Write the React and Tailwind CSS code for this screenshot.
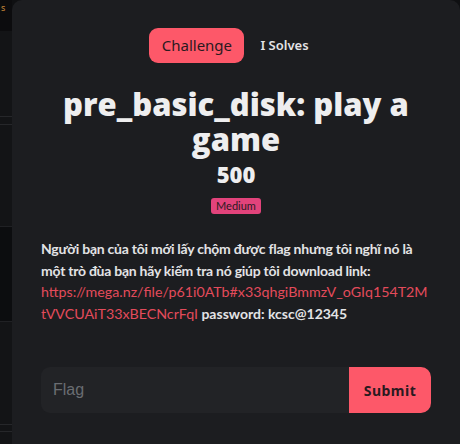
export default function App() {
  return (
    <div className="flex h-[444px] w-[460px] overflow-hidden bg-[#0f1012]">
      {/* backdrop table edge */}
      <div className="flex w-[12px] shrink-0 flex-col">
        <div className="h-[31px] bg-[#0c0c0e] pl-[1px] text-[9px] leading-[16px] text-[#c98a3a]">s</div>
        <div className="h-[86px] border-b border-[#26272a] bg-[#131416]" />
        <div className="h-[8px] border-b border-[#26272a] bg-[#131416]" />
        <div className="h-[102px] border-b border-[#202124] bg-[#131416]" />
        <div className="h-[95px] border-b border-[#202124] bg-[#0c0d0f]" />
        <div className="h-[103px] border-b border-[#26272a] bg-[#131416]" />
        <div className="h-[7px] border-b border-[#26272a] bg-[#131416]" />
        <div className="flex-1 bg-[#131416]" />
      </div>

      <div className="w-[448px] shrink-0 rounded-t-[10px] bg-[#1c1d20] px-[29px] pt-[28px] font-['Lato',sans-serif]">
        <div className="flex items-center justify-center gap-[16px] font-['Noto_Sans','Liberation_Sans',sans-serif]">
          <button className="h-[35px] w-[95px] rounded-[9px] bg-[#fd5869] text-[15px] text-[#2a1a1f]">Challenge</button>
          <button className="pr-[14px] text-[13px] font-semibold text-[#e4e4e6]">I Solves</button>
        </div>

        <h1 className="mt-[24px] text-center font-['Open_Sans',sans-serif] text-[31px] font-extrabold leading-[35px] text-[#eeeeef]">
          pre_basic_disk: play a game
        </h1>
        <div className="mt-[2px] text-center font-['Open_Sans',sans-serif] text-[22px] font-extrabold leading-[30px] text-[#eeeeef]">500</div>
        <div className="mt-[9px] flex justify-center">
          <span className="rounded-[3px] bg-[#e2437b] px-[5px] text-[11px] leading-[16px] text-[#2a1a1f]">Medium</span>
        </div>

        <p className="mt-[24px] break-words text-[14px] font-bold leading-[21.5px] text-[#e3e3e5]">
          <span className="tracking-[-0.25px]">
            Người bạn của tôi mới lấy chộm được flag nhưng tôi nghĩ nó là một trò đùa bạn hãy kiểm tra nó giúp tôi download link:
          </span>{' '}
          <span className="text-[14.25px] font-normal text-[#e34b5b]">https://mega.nz/file/p61i0ATb#x33qhgiBmmzV_oGIq154T2MtVVCUAiT33xBECNcrFqI</span>{' '}
          password: kcsc@12345
        </p>

        <div className="mt-[43px] flex h-[46px]">
          <input
            placeholder="Flag"
            className="min-w-0 flex-1 rounded-l-[9px] bg-[#222326] px-[12px] font-['Liberation_Sans',sans-serif] text-[16px] text-[#ddd] outline-none placeholder:text-[#6a6d72]"
          />
          <button className="w-[82px] rounded-r-[10px] bg-[#fd5869] font-['Noto_Sans',sans-serif] text-[14px] font-bold tracking-[0.5px] text-[#2a1a1f]">
            Submit
          </button>
        </div>
      </div>
    </div>
  );
}
